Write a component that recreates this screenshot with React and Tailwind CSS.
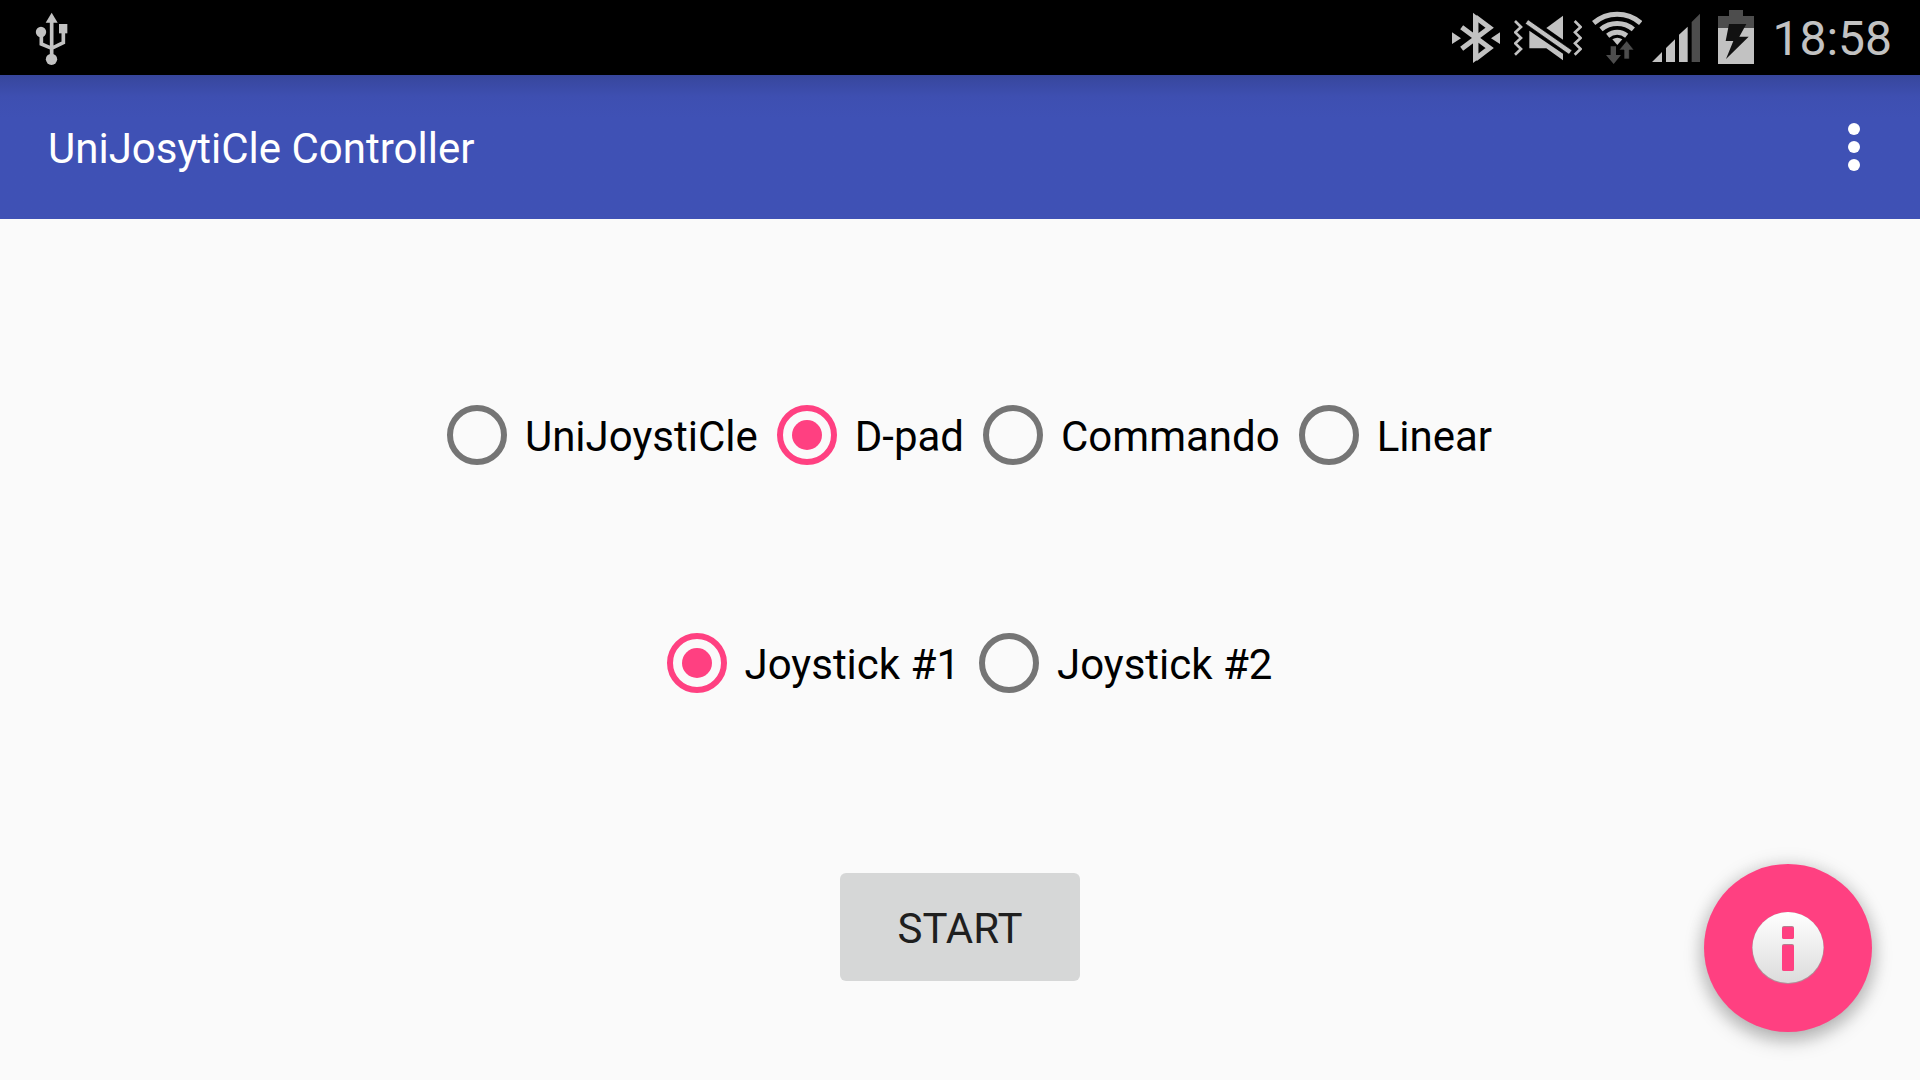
import { useState } from 'react';

function UsbIcon() {
  return (
    <svg viewBox="102 0 108 225" className="h-[75px] w-9" aria-hidden="true">
      <g fill="#c2c2c2">
        <path d="M155 38l18 30h-36z" />
        <circle cx="123" cy="96" r="15.5" />
        <path d="M177 72h25v28h-25z" />
        <circle cx="154.500" cy="178" r="17" />
      </g>
      <path
        d="M155 60v110M124 100v32l31 13 35-17V94"
        fill="none"
        stroke="#c2c2c2"
        strokeWidth="11"
      />
    </svg>
  );
}

function BluetoothIcon() {
  return (
    <svg viewBox="33 0 144 225" className="h-[75px] w-12" aria-hidden="true">
      <path d="M33 97v35l27-17.500zM177 97v35l-27-17.500z" fill="#c2c2c2" />
      <path
        d="M62 82l84 62-42 32V52l42 31-84 63"
        fill="none"
        stroke="#c2c2c2"
        strokeWidth="15"
        strokeMiterlimit="2"
      />
      <path d="M96 38v151l16-12V51z" fill="#c2c2c2" />
    </svg>
  );
}

function MuteVibrateIcon() {
  return (
    <svg viewBox="219 0 204 225" className="h-[75px] w-[68px]" aria-hidden="true">
      <g fill="#c2c2c2">
        <path d="M366 47v72l-50-35z" />
        <path d="M265 92l101 69v20l-50-36h-51z" />
        <path d="M261 59l132 92-9 12-131-92z" stroke="#000" strokeWidth="2" />
      </g>
      <g fill="none" stroke="#c2c2c2" strokeWidth="8">
        <path d="M222 63l18 18-17 16 17 17-17 16 17 17-18 17" />
        <path d="M401 63l18 18-17 16 17 17-17 16 17 17-18 17" />
      </g>
    </svg>
  );
}

function WifiIcon() {
  return (
    <svg viewBox="453 0 150 225" className="h-[75px] w-[50px]" aria-hidden="true">
      <g fill="none" stroke="#c2c2c2" strokeWidth="15">
        <path d="M458 69a108 108 0 0 1 141 0" />
        <path d="M480 88a76 76 0 0 1 97 0" />
        <path d="M500 107a46 46 0 0 1 57 0" />
      </g>
      <path d="M514 118q15-9 30 0l-15 17z" fill="#c2c2c2" />
      <path d="M509 139h16v26h15l-22 27-23-27h14z" fill="#4d4d4d" />
      <path d="M549 177h16v-27h14l-22-28-23 28h15z" fill="#4d4d4d" stroke="#000" strokeWidth="2" />
    </svg>
  );
}

function SignalIcon() {
  return (
    <svg viewBox="36 0 144 225" className="h-[75px] w-12" aria-hidden="true">
      <path
        d="M36 186l30-30v30zM78 186v-42l27-26v68zM117 186v-82l26-24v106z"
        fill="#c2c2c2"
      />
      <path d="M155 186V66l25-25v145z" fill="#4d4d4d" />
    </svg>
  );
}

function BatteryIcon() {
  return (
    <svg viewBox="234 0 108 225" className="h-[75px] w-9" aria-hidden="true">
      <path d="M267 30h42v18h33v36H234V48h33z" fill="#4d4d4d" />
      <path d="M234 84h108v108H234z" fill="#c2c2c2" />
      <path d="M267 72h52l-21 38h28l-68 67 22-54h-23z" fill="#111" />
    </svg>
  );
}

function InfoIcon() {
  return (
    <svg viewBox="0 0 72 72" className="size-[72px]" aria-hidden="true">
      <defs>
        <linearGradient id="disc" x1="0" y1="0" x2="0" y2="1">
          <stop offset="0" stopColor="#fff" />
          <stop offset="1" stopColor="#dcdcdc" />
        </linearGradient>
      </defs>
      <circle cx="36" cy="36" r="36" fill="#b08f98" />
      <circle cx="36" cy="35.500" r="35.500" fill="url(#disc)" />
      <rect x="30" y="14" width="12" height="13" rx="2" fill="#b3808f" />
      <rect x="30" y="15" width="12" height="12" rx="2" fill="#ff4081" />
      <rect x="30" y="32" width="12" height="27" rx="2" fill="#b3808f" />
      <rect x="30" y="33" width="12" height="26" rx="2" fill="#ff4081" />
    </svg>
  );
}

function RadioRow({ name, label, options, value, onChange }) {
  return (
    <fieldset className="flex justify-center" aria-label={label}>
      {options.map((option) => (
        <label key={option} className="flex h-24 items-center pl-[19px] text-[42px] leading-[50px] text-black">
          <input
            type="radio"
            name={name}
            value={option}
            checked={value === option}
            onChange={() => onChange(option)}
            className="mr-[18px] grid size-[60px] shrink-0 appearance-none place-items-center rounded-full border-[6px] border-[#757575] before:size-[30px] before:rounded-full checked:border-[#ff4081] checked:before:bg-[#ff4081]"
          />
          <span className="pt-1">{option}</span>
        </label>
      ))}
    </fieldset>
  );
}

export default function App() {
  const [mode, setMode] = useState('D-pad');
  const [joystick, setJoystick] = useState('Joystick #1');

  return (
    <div className="flex min-h-screen flex-col bg-[#fafafa] font-[Roboto,sans-serif]">
      <div className="flex h-[75px] items-center bg-black pr-7 pl-[34px] text-[#c2c2c2]">
        <UsbIcon />
        <div className="ml-auto flex items-center">
          <BluetoothIcon />
          <div className="flex items-center gap-2.5 pl-3.5">
            <MuteVibrateIcon />
            <WifiIcon />
            <SignalIcon />
          </div>
          <div className="flex items-center gap-[18px] pl-[18px]">
            <BatteryIcon />
            <time className="pt-0.5 text-5xl">18:58</time>
          </div>
        </div>
      </div>

      <header className="flex h-36 items-center justify-between bg-[#3f51b5] bg-linear-to-b from-[#37469c] via-[#3e4fb1] via-15% to-[#3f51b5] to-30% pr-9 pl-12">
        <h1 className="pt-1 text-[42px] leading-[50px] text-white">UniJosytiCle Controller</h1>
        <button type="button" aria-label="More options" className="flex w-[60px] flex-col items-center gap-1.5 py-6">
          <span className="size-3 rounded-full bg-white" />
          <span className="size-3 rounded-full bg-white" />
          <span className="size-3 rounded-full bg-white" />
        </button>
      </header>

      <main className="flex grow flex-col items-center pt-[168px]">
        <RadioRow
          name="mode"
          label="Controller mode"
          options={['UniJoystiCle', 'D-pad', 'Commando', 'Linear']}
          value={mode}
          onChange={setMode}
        />
        <div className="pt-[132px]">
          <RadioRow
            name="joystick"
            label="Joystick port"
            options={['Joystick #1', 'Joystick #2']}
            value={joystick}
            onChange={setJoystick}
          />
        </div>
        <button
          type="button"
          className="mt-[162px] h-[108px] w-60 rounded-md bg-[#d6d7d7] pt-1 text-[42px] leading-[50px] text-[#1f1f1f]"
        >
          START
        </button>
      </main>

      <button
        type="button"
        aria-label="About"
        className="fixed right-12 bottom-12 grid size-[168px] place-items-center rounded-full bg-[#ff4081] shadow-[0_8px_20px_rgba(0,0,0,0.25),0_2px_18px_4px_rgba(0,0,0,0.1)]"
      >
        <InfoIcon />
      </button>
    </div>
  );
}
